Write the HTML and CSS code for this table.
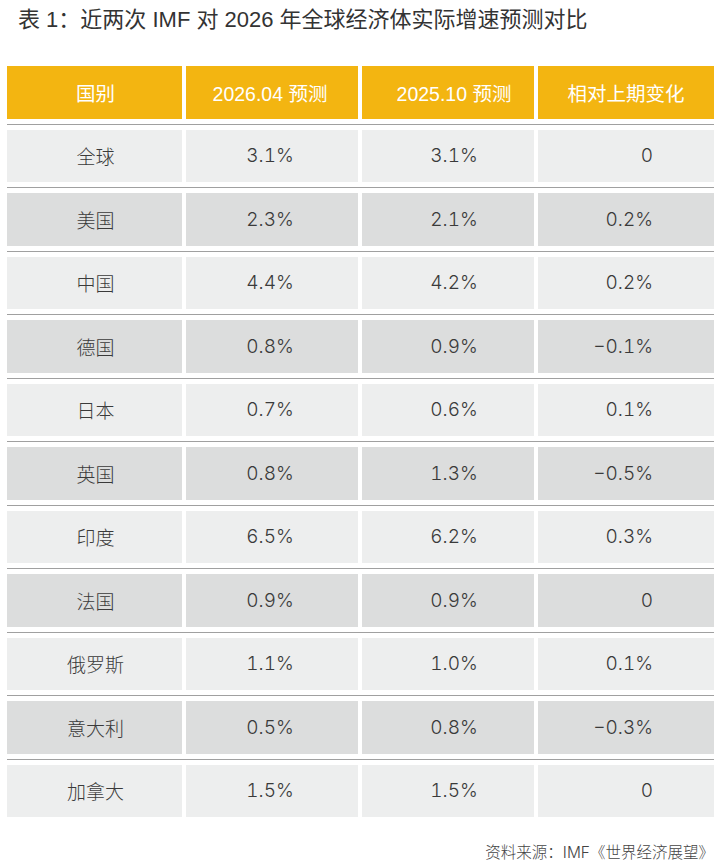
FILE: index.html
```html
<!DOCTYPE html>
<html lang="zh-CN">
<head>
<meta charset="utf-8">
<title>近两次 IMF 对 2026 年全球经济体实际增速预测对比</title>
<link rel="stylesheet" href="styles.css">
</head>
<body>
<div class="page">
  <h1 class="title">表 1：近两次 IMF 对 2026 年全球经济体实际增速预测对比</h1>
  <div class="table">
    <div class="row head">
      <div class="cell c1">国别</div>
      <div class="cell c2">2026.04 预测</div>
      <div class="cell c3">2025.10 预测</div>
      <div class="cell c4h">相对上期变化</div>
    </div>
    <div class="sep"></div>
    <div class="row odd"><div class="cell c1">全球</div><div class="cell c2">3.1%</div><div class="cell c3">3.1%</div><div class="cell c4">0</div></div>
    <div class="sep"></div>
    <div class="row even"><div class="cell c1">美国</div><div class="cell c2">2.3%</div><div class="cell c3">2.1%</div><div class="cell c4">0.2%</div></div>
    <div class="sep"></div>
    <div class="row odd"><div class="cell c1">中国</div><div class="cell c2">4.4%</div><div class="cell c3">4.2%</div><div class="cell c4">0.2%</div></div>
    <div class="sep"></div>
    <div class="row even"><div class="cell c1">德国</div><div class="cell c2">0.8%</div><div class="cell c3">0.9%</div><div class="cell c4">−0.1%</div></div>
    <div class="sep"></div>
    <div class="row odd"><div class="cell c1">日本</div><div class="cell c2">0.7%</div><div class="cell c3">0.6%</div><div class="cell c4">0.1%</div></div>
    <div class="sep"></div>
    <div class="row even"><div class="cell c1">英国</div><div class="cell c2">0.8%</div><div class="cell c3">1.3%</div><div class="cell c4">−0.5%</div></div>
    <div class="sep"></div>
    <div class="row odd"><div class="cell c1">印度</div><div class="cell c2">6.5%</div><div class="cell c3">6.2%</div><div class="cell c4">0.3%</div></div>
    <div class="sep"></div>
    <div class="row even"><div class="cell c1">法国</div><div class="cell c2">0.9%</div><div class="cell c3">0.9%</div><div class="cell c4">0</div></div>
    <div class="sep"></div>
    <div class="row odd"><div class="cell c1">俄罗斯</div><div class="cell c2">1.1%</div><div class="cell c3">1.0%</div><div class="cell c4">0.1%</div></div>
    <div class="sep"></div>
    <div class="row even"><div class="cell c1">意大利</div><div class="cell c2">0.5%</div><div class="cell c3">0.8%</div><div class="cell c4">−0.3%</div></div>
    <div class="sep"></div>
    <div class="row odd"><div class="cell c1">加拿大</div><div class="cell c2">1.5%</div><div class="cell c3">1.5%</div><div class="cell c4">0</div></div>
  </div>
  <p class="source">资料来源：IMF《世界经济展望》</p>
</div>
</body>
</html>
```

FILE: styles.css
```css
html, body {
  margin: 0;
  padding: 0;
  background: #ffffff;
}

body {
  font-family: "Liberation Sans", "Noto Sans CJK SC", sans-serif;
  color: #3a3a3a;
}

.page {
  padding: 0 7px;
}

.title {
  margin: 0;
  padding-left: 11px;
  font-size: 22px;
  line-height: 40px;
  font-weight: normal;
  color: #333333;
  white-space: nowrap;
}

.table {
  margin-top: 26px;
}

.row {
  display: grid;
  grid-template-columns: 175px 172px 172px 176px;
  column-gap: 4px;
  height: 52.5px;
}

.cell {
  display: flex;
  align-items: center;
  justify-content: center;
  font-family: "Inter", "Noto Sans CJK SC", sans-serif;
  font-size: 19px;
  font-weight: 300;
  font-variant-numeric: tabular-nums;
}

.head .cell {
  background: #f3b511;
  color: #ffffff;
  font-family: "Liberation Sans", "Noto Sans CJK SC", sans-serif;
  font-size: 19.5px;
  font-weight: normal;
}

.odd .cell {
  background: #edeeee;
}

.even .cell {
  background: #dcdddd;
}

.c1 {
  padding-left: 2px;
}

.c2 {
  padding-right: 4px;
}

.c3 {
  padding-left: 12px;
}

.c4 {
  justify-content: flex-end;
  padding-right: 61px;
}

.sep {
  height: 1px;
  background: #a0a0a0;
  margin: 5px 0;
}

.source {
  margin: 26px 0 0;
  text-align: right;
  font-family: "Inter", "Noto Sans CJK SC", sans-serif;
  font-size: 15.5px;
  line-height: 20px;
  font-weight: 300;
  color: #444444;
}
```
